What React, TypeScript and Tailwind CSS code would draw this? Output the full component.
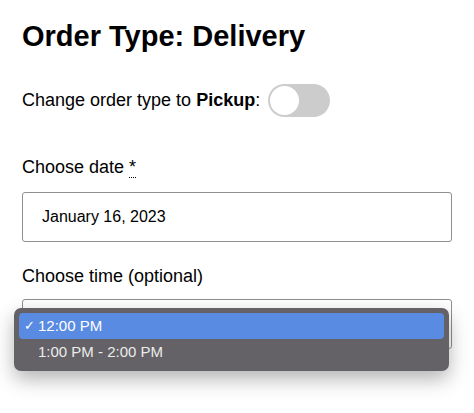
import React from 'react';

const font = { fontFamily: '"Liberation Sans", Arial, sans-serif' };

function Toggle() {
    return (
        <span className="inline-flex h-[33px] w-[62px] items-center rounded-full bg-[#cccccc] p-[2px]">
            <span className="h-[29px] w-[29px] rounded-full bg-white" />
        </span>
    );
}

export default function App() {
    return (
        <div className="min-h-[413px] w-[474px] bg-white px-[22px] pt-[16px] text-black" style={font}>
            <h1 className="text-[29px] font-bold leading-[40px]">Order Type: Delivery</h1>

            <div className="mt-[28px] flex items-center gap-[8px] text-[18px]">
                <span>
                    Change order type to <b>Pickup</b>:
                </span>
                <Toggle />
            </div>

            <div className="mt-[38px] text-[18px] leading-[24px]">
                Choose date{' '}
                <abbr className="no-underline border-b border-dotted border-black" title="required">*</abbr>
            </div>
            <div className="mt-[13px] flex h-[50px] items-center rounded-[3px] border border-[#8f8f8f] px-[19px] text-[16px]">
                January 16, 2023
            </div>

            <div className="mt-[22px] text-[18px] leading-[24px]">Choose time (optional)</div>
            <div className="relative mt-[11px]">
                <div className="flex h-[50px] items-center justify-end rounded-[3px] border border-[#8f8f8f] pr-[4px]">
                    <svg width="8" height="6" viewBox="0 0 8 6" className="mt-[2px]">
                        <path d="M1 1.5 L4 4.5 L7 1.5" fill="none" stroke="#333" strokeWidth="1.3" />
                    </svg>
                </div>
                <div className="absolute left-[-8px] top-[9px] w-[435px] rounded-[7px] bg-[#646266] p-[5px] shadow-[0_8px_20px_rgba(0,0,0,0.3)] text-[15px]">
                    <div className="flex h-[26px] items-center rounded-[4px] bg-[#5a8be3] pl-[5px] text-white">
                        <span className="w-[14px] text-[13px]">✓</span>
                        <span>12:00 PM</span>
                    </div>
                    <div className="flex h-[27px] items-center pl-[19px] text-[#ececec]">1:00 PM - 2:00 PM</div>
                </div>
            </div>
        </div>
    );
}
